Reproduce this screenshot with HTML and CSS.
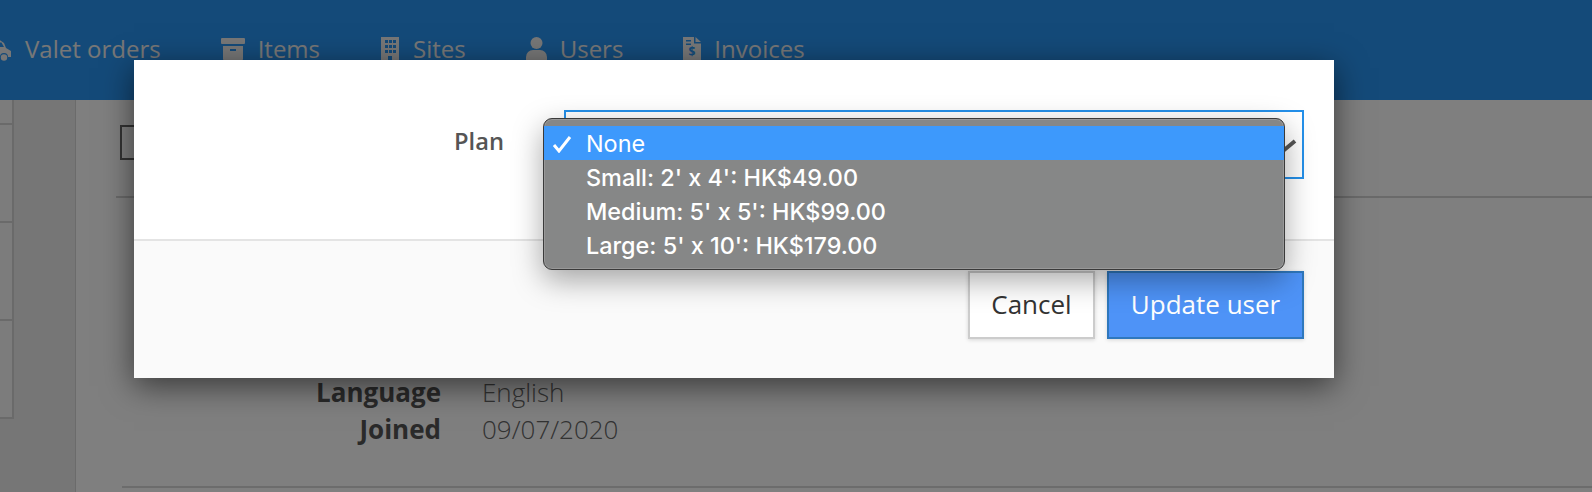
FILE: index.html
```html
<!DOCTYPE html>
<html>
<head>
    <title>User details</title>
    <link rel="stylesheet" href="styles.css">
</head>
<body>
    <header class="topbar">
        <nav class="nav">
            <a class="nav-item">
                <svg class="nav-icon" width="24" height="24" viewBox="0 0 24 24"><path d="M0 8h6V1h3l7 5 2 5 5 3v6h-3a4 4 0 0 0-8 0H8a4 4 0 0 0-8 0z"/><circle cx="16" cy="20.500" r="3.200"/><path class="nav-cut" d="M11 5.500h2.500l2.500 4.500h-5z"/></svg>
                Valet orders
            </a>
            <a class="nav-item">
                <svg class="nav-icon" width="24" height="24" viewBox="0 0 24 24"><rect x="0" y="1" width="24" height="6" rx="1"/><path d="M2 9h20v13a2 2 0 0 1-2 2H4a2 2 0 0 1-2-2z"/><rect class="nav-cut" x="9" y="12" width="6" height="2"/></svg>
                Items
            </a>
            <a class="nav-item">
                <svg class="nav-icon" width="20" height="24" viewBox="-1 0 20 24"><path d="M0 0h18v24H0z"/><g class="nav-cut"><rect x="4" y="3" width="3" height="3"/><rect x="8" y="3" width="3" height="3"/><rect x="12" y="3" width="3" height="3"/><rect x="4" y="8" width="3" height="3"/><rect x="8" y="8" width="3" height="3"/><rect x="12" y="8" width="3" height="3"/><rect x="4" y="13" width="3" height="3"/><rect x="8" y="13" width="3" height="3"/><rect x="12" y="13" width="3" height="3"/><rect x="7" y="19" width="4" height="5"/></g></svg>
                Sites
            </a>
            <a class="nav-item">
                <svg class="nav-icon" width="21" height="24" viewBox="0 0 21 24"><circle cx="10.500" cy="6" r="6"/><path d="M0 24v-4a7 7 0 0 1 7-7h7a7 7 0 0 1 7 7v4z"/></svg>
                Users
            </a>
            <a class="nav-item">
                <svg class="nav-icon" width="18" height="24" viewBox="0 0 18 24"><path d="M0 0h11v6.500h7V24H0z"/><path d="M12.500 0L18 5h-5.500z"/><g class="nav-cut"><rect x="3" y="3" width="5" height="1.500"/><rect x="3" y="6.500" width="5" height="1.500"/></g><text class="nav-dollar" x="9" y="19">$</text></svg>
                Invoices
            </a>
        </nav>
    </header>

    <div class="layout">
        <aside class="sidebar">
            <div class="side-card side-card-first"></div>
            <div class="side-card"></div>
            <div class="side-card"></div>
            <div class="side-card"></div>
        </aside>
        <main class="content">
            <div class="page-head">
                <span class="page-box"></span>
            </div>
            <dl class="details">
                <dt>Language</dt>
                <dd>English</dd>
                <dt>Joined</dt>
                <dd>09/07/2020</dd>
            </dl>
            <div class="rule"></div>
        </main>
    </div>

    <div class="backdrop"></div>

    <div class="modal">
        <div class="modal-body">
            <label class="field-label">Plan</label>
            <div class="select">
                <svg class="select-arrow" width="28" height="16" viewBox="0 0 28 16"><path d="M2 2l12 10 12-10" fill="none" stroke="#555" stroke-width="4"/></svg>
                <ul class="menu">
                    <li class="menu-item selected">
                        <svg class="menu-check" width="20" height="18" viewBox="0 0 20 18"><path d="M2 10l5 6L18 2" fill="none" stroke="#fff" stroke-width="3"/></svg>
                        None
                    </li>
                    <li class="menu-item">Small: 2' x 4': HK$49.00</li>
                    <li class="menu-item">Medium: 5' x 5': HK$99.00</li>
                    <li class="menu-item">Large: 5' x 10': HK$179.00</li>
                </ul>
            </div>
        </div>
        <div class="modal-footer">
            <button class="btn btn-cancel">Cancel</button>
            <button class="btn btn-primary">Update user</button>
        </div>
    </div>
</body>
</html>
```

FILE: styles.css
```css
body {
    font-family: "Open Sans", sans-serif;
    background-color: #fff;
    margin: 0;
    height: 492px;
    overflow: hidden;
    position: relative;
}
.topbar {
    background-color: #2894f2;
    height: 100px;
}
.nav {
    display: flex;
    gap: 60px;
    margin-left: -12px;
    padding-top: 34px;
}
.nav-item {
    display: flex;
    align-items: center;
    gap: 13px;
    color: #eee;
    font-size: 24px;
    line-height: 30px;
}
.nav-icon {
    fill: #eee;
}
.nav-cut {
    fill: #2894f2;
}
.nav-dollar {
    fill: #2894f2;
    font-size: 12px;
    font-weight: 700;
    text-anchor: middle;
}
.layout {
    display: flex;
    height: 392px;
}
.sidebar {
    width: 75px;
    background-color: #ececec;
    border-right: 1px solid #d6d6d6;
}
.side-card {
    width: 12px;
    height: 96px;
    background-color: #f8f8f8;
    border-right: 2px solid #d4d4d4;
    border-bottom: 2px solid #d4d4d4;
}
.side-card-first {
    height: 23px;
}
.content {
    flex: 1;
}
.page-head {
    height: 71px;
    margin-left: 40px;
    padding-top: 25px;
    border-bottom: 2px solid #d4d4d4;
}
.page-box {
    display: block;
    width: 60px;
    height: 31px;
    margin-left: 4px;
    border: 2px solid #666;
}
.details {
    display: grid;
    grid-template-columns: 365px auto;
    column-gap: 41px;
    justify-content: start;
    margin: 176px 0 38px;
    font-size: 26px;
    line-height: 37px;
}
.details dt {
    color: #555;
    font-weight: 700;
    text-align: right;
}
.details dd {
    color: #666;
    font-weight: 300;
    margin: 0;
}
.rule {
    margin-left: 46px;
    border-top: 2px solid #d8d8d8;
}
.backdrop {
    position: absolute;
    top: 0;
    left: 0;
    right: 0;
    bottom: 0;
    background-color: rgba(0, 0, 0, 0.5);
}
.modal {
    position: absolute;
    top: 60px;
    left: 134px;
    width: 1200px;
    height: 318px;
    display: flex;
    flex-direction: column;
    background: #fff;
    box-shadow: 0 8px 30px rgba(0, 0, 0, 0.55);
}
.modal-body {
    display: flex;
    height: 129px;
    padding: 50px 30px 0 0;
    border-bottom: 2px solid #e4e4e4;
}
.field-label {
    width: 370px;
    margin-right: 60px;
    color: #555;
    font-size: 23.700px;
    font-weight: 600;
    line-height: 62px;
    text-align: right;
}
.select {
    position: relative;
    flex: 1;
    height: 65px;
    border: 2px solid #2490ea;
}
.select-arrow {
    position: absolute;
    top: 27px;
    right: 5px;
}
.menu {
    position: absolute;
    top: 6px;
    left: -23px;
    right: 17px;
    height: 143px;
    margin: 0;
    padding: 7px 0 0;
    list-style: none;
    background-color: #868787;
    border: 1px solid #3a3a3a;
    border-radius: 9px;
    box-shadow: inset 0 0 0 1px #999, 0 10px 30px rgba(0, 0, 0, 0.35);
    color: #fff;
    font-family: Inter, sans-serif;
    font-size: 23.400px;
    font-weight: 500;
}
.menu-item {
    position: relative;
    height: 34px;
    padding-left: 42px;
    line-height: 36px;
}
.selected {
    background-color: #3d99fc;
    font-weight: 400;
}
.menu-check {
    position: absolute;
    top: 9px;
    left: 8px;
}
.modal-footer {
    flex: 1;
    display: flex;
    justify-content: flex-end;
    gap: 12px;
    padding: 30px 30px 0 0;
    background-color: #fafafa;
}
.btn {
    height: 68px;
    padding-bottom: 4px;
    font-family: "Open Sans", sans-serif;
    font-size: 26px;
    box-shadow: 0 1px 4px rgba(0, 0, 0, 0.15);
}
.btn-cancel {
    width: 127px;
    background-color: #fff;
    border: 2px solid #ccc;
    color: #333;
}
.btn-primary {
    width: 197px;
    background-color: #4e93f7;
    border: 2px solid #2f78bd;
    color: #fff;
}
```
